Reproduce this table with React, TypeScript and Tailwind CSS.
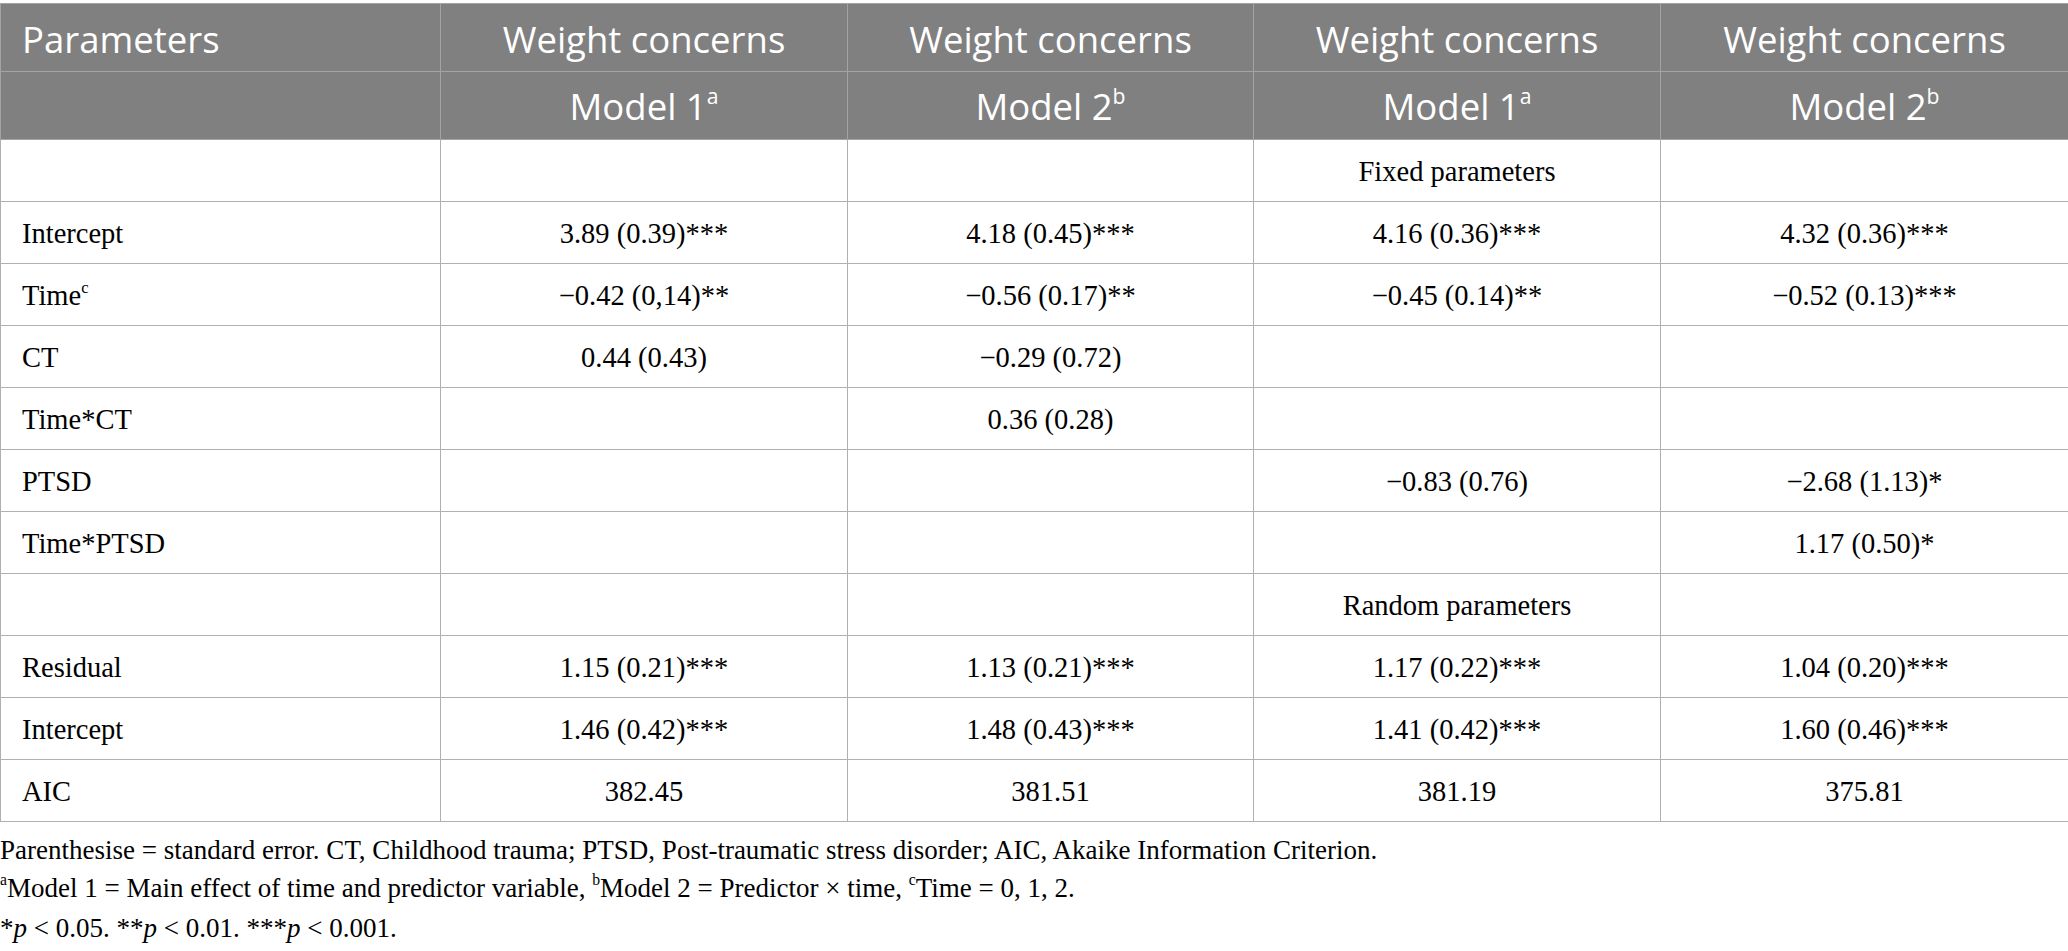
import React from "react";

const serif = "font-['Liberation_Serif','Times_New_Roman',serif]";

function Sup({ children }: { children: React.ReactNode }) {
  return <span className="text-[0.58em] relative -top-[0.75em] align-baseline">{children}</span>;
}

type Row = { label: React.ReactNode; cells: React.ReactNode[] };

const rows: Row[] = [
  { label: "", cells: ["", "", "Fixed parameters", ""] },
  { label: "Intercept", cells: ["3.89 (0.39)***", "4.18 (0.45)***", "4.16 (0.36)***", "4.32 (0.36)***"] },
  {
    label: (
      <>
        Time<Sup>c</Sup>
      </>
    ),
    cells: ["−0.42 (0,14)**", "−0.56 (0.17)**", "−0.45 (0.14)**", "−0.52 (0.13)***"],
  },
  { label: "CT", cells: ["0.44 (0.43)", "−0.29 (0.72)", "", ""] },
  { label: "Time*CT", cells: ["", "0.36 (0.28)", "", ""] },
  { label: "PTSD", cells: ["", "", "−0.83 (0.76)", "−2.68 (1.13)*"] },
  { label: "Time*PTSD", cells: ["", "", "", "1.17 (0.50)*"] },
  { label: "", cells: ["", "", "Random parameters", ""] },
  { label: "Residual", cells: ["1.15 (0.21)***", "1.13 (0.21)***", "1.17 (0.22)***", "1.04 (0.20)***"] },
  { label: "Intercept", cells: ["1.46 (0.42)***", "1.48 (0.43)***", "1.41 (0.42)***", "1.60 (0.46)***"] },
  { label: "AIC", cells: ["382.45", "381.51", "381.19", "375.81"] },
];

export default function App() {
  const models = [
    <>Model 1<Sup>a</Sup></>,
    <>Model 2<Sup>b</Sup></>,
    <>Model 1<Sup>a</Sup></>,
    <>Model 2<Sup>b</Sup></>,
  ];
  return (
    <div className="w-[2068px] bg-white pt-[3px]">
      <table className="w-[2068px] table-fixed border-collapse border border-[#b0b0b0]">
        <colgroup>
          <col className="w-[440px]" />
          <col className="w-[407px]" />
          <col className="w-[406px]" />
          <col className="w-[407px]" />
          <col className="w-[408px]" />
        </colgroup>
        <thead className="bg-[#808080] text-white font-['Open_Sans',sans-serif] text-[36.5px]">
          <tr className="h-[68px]">
            <th className="border border-[#a3a3a3] text-left font-normal pl-[21px] pt-[4px] leading-none">Parameters</th>
            {[0, 1, 2, 3].map((i) => (
              <th key={i} className="border border-[#a3a3a3] text-center font-normal pt-[4px] leading-none">
                Weight concerns
              </th>
            ))}
          </tr>
          <tr className="h-[68px]">
            <th className="border border-[#a3a3a3]"></th>
            {models.map((m, i) => (
              <th key={i} className="border border-[#a3a3a3] text-center font-normal pt-[2px] leading-none">
                {m}
              </th>
            ))}
          </tr>
        </thead>
        <tbody className={`${serif} text-[28.5px] text-black`}>
          {rows.map((r, i) => (
            <tr key={i} className="h-[62px]">
              <td className="border border-[#b0b0b0] pl-[21px] pt-[4px] leading-none">{r.label}</td>
              {r.cells.map((c, j) => (
                <td key={j} className="border border-[#b0b0b0] text-center pt-[4px] leading-none">
                  {c}
                </td>
              ))}
            </tr>
          ))}
        </tbody>
      </table>
      <div className={`${serif} text-[27px] leading-[37.5px] text-black mt-[10px]`}>
        <div>Parenthesise = standard error. CT, Childhood trauma; PTSD, Post-traumatic stress disorder; AIC, Akaike Information Criterion.</div>
        <div>
          <Sup>a</Sup>Model 1 = Main effect of time and predictor variable, <Sup>b</Sup>Model 2 = Predictor × time, <Sup>c</Sup>Time = 0, 1, 2.
        </div>
        <div>
          *<i>p</i> &lt; 0.05. **<i>p</i> &lt; 0.01. ***<i>p</i> &lt; 0.001.
        </div>
      </div>
    </div>
  );
}
